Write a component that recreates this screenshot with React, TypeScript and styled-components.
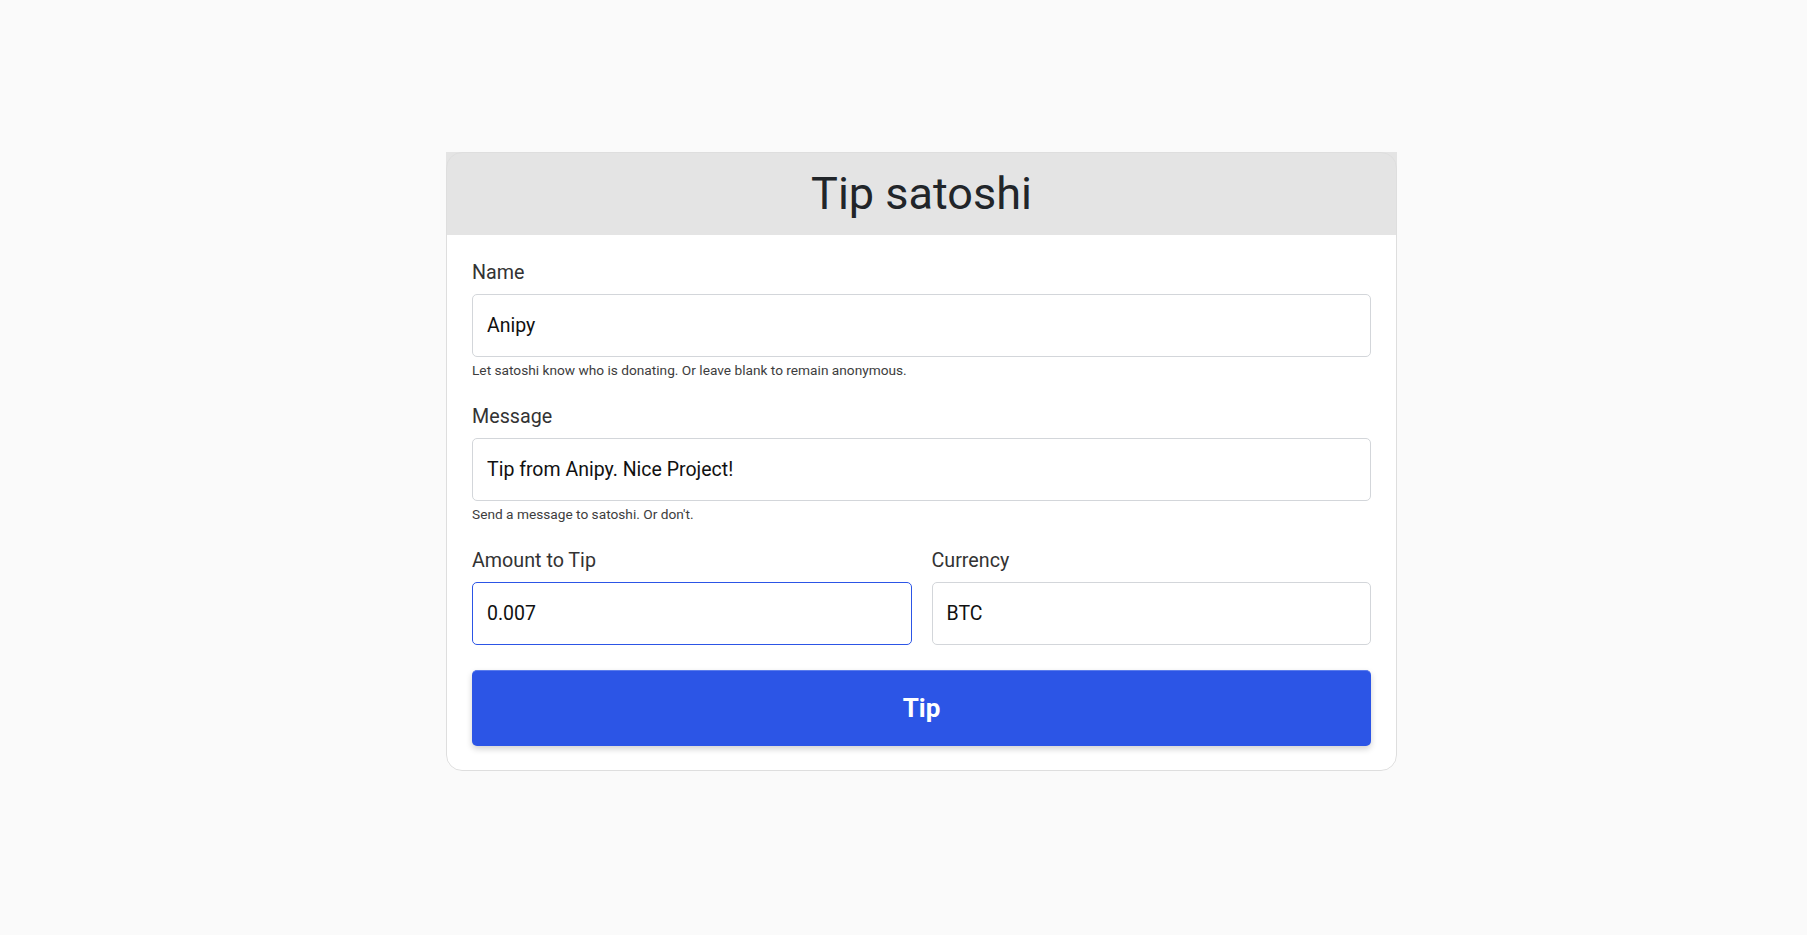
import { useEffect, useRef, useState } from "react";
import styled, { createGlobalStyle } from "styled-components";

const GlobalStyle = createGlobalStyle`
  * {
    box-sizing: border-box;
  }

  body {
    margin: 0;
    background: #fafafa;
    font-family: Roboto, "Liberation Sans", sans-serif;
    color: #222;
  }
`;

interface FieldProps {
  label: string;
  value: string;
  help?: string;
  focused?: boolean;
  onChange: (v: string) => void;
}

const Field = ({ label, value, help, focused, onChange }: FieldProps) => {
  const ref = useRef<HTMLInputElement>(null);

  useEffect(() => {
    // put the caret at the end of the focused field
    if (focused && ref.current) {
      const el = ref.current;
      el.focus();
      el.setSelectionRange(el.value.length, el.value.length);
    }
  }, [focused]);

  return (
    <Group>
      <Label>{label}</Label>
      <Input
        ref={ref}
        type="text"
        value={value}
        $focused={focused}
        onChange={(e) => onChange(e.target.value)}
      />
      {help && <Help>{help}</Help>}
    </Group>
  );
};

const App = () => {
  const [name, setName] = useState("Anipy");
  const [message, setMessage] = useState("Tip from Anipy. Nice Project!");
  const [amount, setAmount] = useState("0.007");
  const [currency, setCurrency] = useState("BTC");

  return (
    <>
      <GlobalStyle />
      <Page>
        <Card>
          <Header>
            <Title>Tip satoshi</Title>
          </Header>

          <Body>
            <Field
              label="Name"
              value={name}
              onChange={setName}
              help="Let satoshi know who is donating. Or leave blank to remain anonymous."
            />
            <Field
              label="Message"
              value={message}
              onChange={setMessage}
              help="Send a message to satoshi. Or don't."
            />

            <Row>
              <Field label="Amount to Tip" value={amount} onChange={setAmount} focused />
              <Field label="Currency" value={currency} onChange={setCurrency} />
            </Row>

            <TipButton type="button">Tip</TipButton>
          </Body>
        </Card>
      </Page>
    </>
  );
};

const Page = styled.div`
  min-height: 100vh;
  display: flex;
  justify-content: center;
  align-items: flex-start;
  padding: 152px 0 0 36px;
`;

const Card = styled.div`
  position: relative;
  width: 951px;
  background: #fff;
  border: 1px solid transparent;
  border-radius: 16px;

  /* border drawn over the square header corners */
  &::after {
    content: "";
    position: absolute;
    inset: -1px;
    border: 1px solid #dedede;
    border-radius: 16px;
    pointer-events: none;
  }
`;

const Header = styled.div`
  margin: -1px -1px 0;
  height: 83px;
  background: #e4e4e4;
  display: flex;
  align-items: center;
  justify-content: center;
`;

const Title = styled.h1`
  margin: 0;
  font-size: 45px;
  font-weight: 400;
  color: #212529;
`;

const Body = styled.div`
  padding: 23px 25px 24px;
`;

const Group = styled.div`
  display: flex;
  flex-direction: column;
  margin-bottom: 22px;
  min-width: 0;
`;

const Label = styled.label`
  font-size: 19.7px;
  line-height: 1.5;
  color: #333;
  margin-bottom: 6px;
`;

const Input = styled.input<{ $focused?: boolean }>`
  height: 63px;
  width: 100%;
  padding: 0 14px;
  border: 1px solid ${({ $focused }) => ($focused ? "#2c55e6" : "#d3d6da")};
  border-radius: 5px;
  background: #fff;
  font-family: Roboto, "Liberation Sans", sans-serif;
  font-size: 19.5px;
  color: #111;
  outline: none;
  caret-color: #111;
`;

const Help = styled.small`
  margin-top: 3px;
  font-size: 13.7px;
  line-height: 1.5;
  color: #3d3d3d;
`;

const Row = styled.div`
  display: grid;
  grid-template-columns: 1fr 1fr;
  gap: 20px;

  & > div {
    margin-bottom: 25px;
  }
`;

const TipButton = styled.button`
  display: block;
  width: 100%;
  height: 76px;
  border: none;
  border-top: 1px solid #5a7cec;
  border-radius: 5px;
  background: #2c55e6;
  color: #fff;
  font-family: Roboto, "Liberation Sans", sans-serif;
  font-size: 26px;
  font-weight: 700;
  box-shadow: 0 3px 6px rgba(0, 0, 0, 0.18);
  cursor: pointer;
`;

export default App;
